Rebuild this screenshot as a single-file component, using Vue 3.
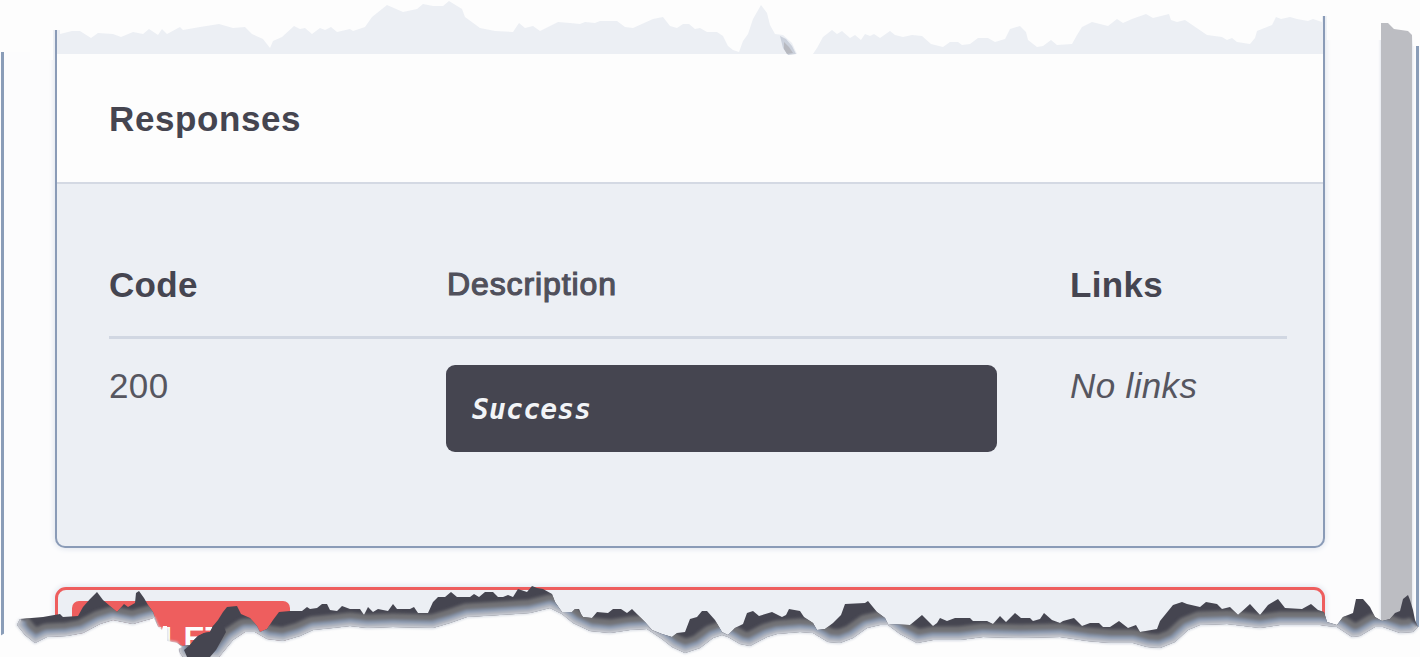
<script setup>
const topEdge =
  '60,34 72,31 80,31 91,38 98,33 113,34 121,37 133,32 143,34 149,29 158,35 162,29 167,34 180,27 183,30 200,27 219,24 233,28 245,27 252,34 263,39 270,48 273,41 282,37 294,26 300,29 305,28 312,34 320,28 325,30 331,27 337,32 350,29 353,31 365,27 372,17 387,5 403,12 417,9 423,4 433,6 443,6 449,1 462,9 465,17 480,28 495,31 513,32 519,23 525,28 533,26 540,31 558,22 570,23 580,24 585,22 595,23 600,21 617,21 625,27 633,28 653,19 663,17 670,26 677,28 683,24 689,24 695,29 700,28 707,32 717,32 723,36 728,46 733,50 739,52 743,41 748,34 753,19 761,5 767,13 770,25 775,34 783,35 792,43 797,54 813,54 817,48 823,37 832,30 837,34 842,31 850,38 855,35 861,40 865,34 870,36 874,34 880,38 890,31 895,35 903,37 912,35 922,36 931,44 943,47 950,42 958,42 962,45 970,44 978,38 988,38 995,42 1005,39 1010,29 1020,26 1026,32 1028,40 1037,47 1043,46 1051,40 1057,45 1072,44 1077,35 1082,27 1092,22 1108,26 1117,19 1123,23 1132,19 1146,14 1153,18 1169,14 1171,20 1177,22 1185,20 1207,35 1222,37 1227,40 1232,38 1237,42 1250,44 1255,38 1257,31 1272,25 1276,17 1281,19 1290,17 1297,19 1308,21 1313,19 1322,22'

const ridge =
  '20,619 43,617 60,614 63,617 78,616 83,607 90,599 97,592 103,600 110,606 117,612 124,604 128,607 135,603 136,593 139,591 144,598 148,605 153,612 158,627 162,630 167,629 167,641 177,643 182,646 190,645 194,640 198,636 204,633 210,632 213,626 218,620 223,612 227,607 237,606 241,614 250,618 257,626 260,632 267,629 273,620 279,612 290,611 302,611 307,607 310,609 317,608 322,604 327,604 330,610 337,611 342,606 350,609 360,609 364,615 368,607 373,612 378,609 388,611 393,604 397,609 410,609 414,607 418,613 428,613 433,602 438,597 445,597 451,592 457,597 470,597 474,594 479,597 485,592 493,592 498,597 503,597 508,595 513,597 518,589 527,592 532,586 537,588 543,589 552,594 555,602 562,612 572,612 575,609 579,609 581,614 583,617 592,618 597,612 608,613 613,609 621,609 627,613 632,609 638,615 645,622 652,630 662,634 672,637 677,633 685,632 690,619 697,617 702,611 707,611 715,620 722,632 728,635 735,628 743,624 747,613 753,611 759,616 772,612 782,617 786,615 789,609 800,611 804,617 813,623 817,630 825,629 833,623 841,615 845,604 865,603 868,601 877,612 885,618 888,624 910,625 922,615 930,623 933,626 937,623 940,618 947,621 955,618 970,618 973,621 987,621 993,624 1000,616 1006,622 1015,613 1021,618 1030,618 1033,621 1040,619 1044,613 1052,620 1060,623 1063,621 1074,618 1082,626 1090,623 1099,623 1103,627 1110,627 1119,621 1128,628 1136,625 1140,632 1157,629 1160,621 1173,605 1182,602 1187,604 1200,607 1206,602 1217,604 1222,609 1230,607 1238,615 1250,604 1260,615 1268,605 1278,599 1285,608 1302,609 1311,604 1318,610 1324,612 1327,622 1337,625 1343,617 1353,613 1356,599 1363,599 1370,607 1375,617 1382,621 1390,619 1395,613 1400,611 1403,599 1408,595 1410,600 1413,610 1415,620 1418,627'

const foot =
  '20,619 17,625 25,635 35,643 47,637 67,636 83,633 100,624 113,620 133,624 143,621 154,618 158,627 162,630 167,629 167,641 177,643 179,647 180,653 183,657 219,657 233,640 245,632 255,632 267,639 283,641 300,636 313,630 333,628 350,626 367,628 393,627 433,628 450,623 467,617 500,615 530,613 550,608 562,614 573,623 590,631 610,633 630,630 647,629 662,639 672,647 685,653 700,648 713,638 722,635 728,637 740,644 750,646 767,637 777,634 800,632 813,633 828,642 840,643 853,638 867,628 880,625 888,625 900,634 917,643 933,640 960,640 983,637 1020,638 1060,637 1087,641 1110,643 1133,643 1147,647 1160,648 1175,642 1188,630 1200,625 1227,624 1260,628 1280,625 1320,625 1327,626 1337,627 1352,637 1360,636 1375,627 1383,627 1400,633 1413,632 1418,627'

const torn = ridge + ' ' + foot.split(' ').reverse().join(' ')
</script>

<template>
  <div class="page">
    <div class="frame-line left"></div>

    <main class="content">
      <section class="card">
        <div class="strip"></div>
        <header class="head"><h2>Responses</h2></header>
        <div class="table">
          <div class="row titles">
            <span class="strong">Code</span>
            <span class="desc">Description</span>
            <span class="strong">Links</span>
          </div>
          <div class="row values">
            <span>200</span>
            <div class="box">Success</div>
            <em>No links</em>
          </div>
        </div>
      </section>
      <section class="card danger">
        <span class="method">DELETE</span>
      </section>
    </main>

    <div class="scroll"></div>
    <div class="frame-line right"></div>

    <svg class="tears" width="1420" height="657" viewBox="0 0 1420 657">
      <defs>
        <clipPath id="torn"><polygon :points="torn" /></clipPath>
        <filter id="soft" filterUnits="userSpaceOnUse" x="0" y="560" width="1420" height="120">
          <feGaussianBlur stdDeviation="1.5" />
        </filter>
        <filter id="softer" filterUnits="userSpaceOnUse" x="0" y="560" width="1420" height="120">
          <feGaussianBlur stdDeviation="1" />
        </filter>
      </defs>
      <polygon :points="'60,0 ' + topEdge + ' 1322,0'" fill="#fdfdfd" />
      <path d="M0 0H60V30H53V60H30V52H0ZM1321 0H1420V46H1413L1412 35L1408 31L1394 29L1388 23H1381V40H1327V16H1321Z" fill="#fdfdfd" />
      <path d="M780 36L786 39L792 46L796 54L788 55L783 48Z" fill="#cbd1dc" />
      <path d="M784 42L789 47L793 53L787 54L784 49Z" fill="#b7b9c0" />

      <polygon :points="'0,636 10,630 20,619 ' + foot + ' 1420,627 1420,657 0,657'" fill="#fdfdfd" />
      <polyline :points="foot" fill="none" stroke="#d3d8e1" stroke-width="2" filter="url(#softer)" />
      <polygon :points="torn" fill="#454550" />
      <g clip-path="url(#torn)" fill="none" stroke-linejoin="round">
        <g filter="url(#soft)">
          <polyline :points="foot" stroke="#727276" stroke-width="27" />
          <polyline :points="foot" stroke="#8c9bb3" stroke-width="14" />
          <polyline :points="foot" stroke="#bbbdc4" stroke-width="7" />
        </g>
        <polyline :points="foot" stroke="#c3c6ce" stroke-width="3" />
      </g>
      <polygon points="190,645 194,640 198,636 204,633 210,632 213,626 222,622 226,632 216,650 210,657 187,657 184,650" fill="#454550" />
      <path d="M154 618L158 627L162 630L163 626H167V641L177 643L182 647L178 649L180 657H150V620Z" fill="#fdfdfd" />
    </svg>
  </div>
</template>

<style>
body {
  margin: 0;
  overflow: hidden;
}
</style>

<style scoped>
.page {
  position: relative;
  display: flex;
  width: 1420px;
  height: 657px;
  overflow: hidden;
  box-sizing: border-box;
  padding-left: 1px;
  background: #fcfcfd;
  font-family: "Liberation Sans", Arial, sans-serif;
  font-size: 35px;
  line-height: 40px;
  color: #454550;
}
.frame-line {
  width: 3px;
  flex: none;
  background: #8a9db8;
}
.left {
  height: 585px;
  margin-top: 51px;
}
.right {
  height: 581px;
  margin: 46px 0 0 4px;
}
.content {
  width: 1270px;
  flex: none;
  margin-left: 51px;
}
.card {
  height: 548px;
  box-sizing: border-box;
  border: 2px solid #8a9bb7;
  border-top: 0;
  border-radius: 0 0 10px 10px;
  background: #eceff4;
  box-shadow: 0 0 6px #d5dce8;
  overflow: hidden;
}
.strip {
  height: 54px;
}
.head {
  height: 130px;
  box-sizing: border-box;
  padding: 45px 52px 0;
  background: #fdfdfd;
  border-bottom: 2px solid #d4d9e3;
}
h2 {
  margin: 0;
  font-size: 35px;
  line-height: 40px;
  letter-spacing: 0.6px;
}
.table {
  padding: 81px 36px 0 52px;
}
.row {
  display: grid;
  grid-template-columns: 337px 624px 1fr;
}
.titles {
  height: 74px;
  box-sizing: border-box;
  border-bottom: 3px solid #d1d7e2;
}
.strong {
  font-weight: bold;
  letter-spacing: 0.3px;
}
.desc {
  padding-left: 1px;
  font-size: 32px;
  line-height: 38px;
  letter-spacing: 0.9px;
  -webkit-text-stroke: 1.2px #50505b;
  color: #50505b;
}
.values {
  padding-top: 26px;
  line-height: 41px;
  letter-spacing: 0.35px;
  color: #56565f;
}
.box {
  width: 551px;
  height: 87px;
  box-sizing: border-box;
  padding: 25px 26px;
  border-radius: 9px;
  background: #454550;
  color: #f2f4f7;
  font: italic bold 28px/40px "DejaVu Sans Mono", monospace;
  letter-spacing: 0.2px;
}
.danger {
  height: 100px;
  margin-top: 39px;
  border: 3px solid #ee5e5e;
  border-radius: 11px;
  padding: 11px 14px;
}
.method {
  display: block;
  box-sizing: border-box;
  width: 218px;
  height: 74px;
  padding-left: 3px;
  border-radius: 7px;
  background: #ee5e5e;
  color: #fdfdfd;
  font-size: 32px;
  font-weight: bold;
  line-height: 74px;
  text-align: center;
  letter-spacing: 0.5px;
}
.scroll {
  width: 31px;
  height: 605px;
  flex: none;
  margin: 22px 0 0 56px;
  background: #bcbdc2;
  box-shadow: 0 0 3px #d0d7e2;
}
.tears {
  position: absolute;
  left: 0;
  top: 0;
}
</style>
